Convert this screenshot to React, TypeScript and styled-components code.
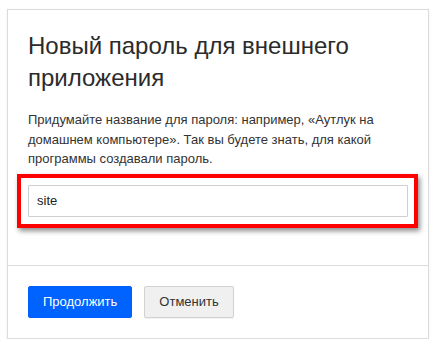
import React from "react";
import styled, { createGlobalStyle } from "styled-components";

const Global = createGlobalStyle`
  html, body { margin: 0; padding: 0; background: #fff; }
  body { font-family: "Liberation Sans", Arial, sans-serif; color: #333; }
  * { box-sizing: border-box; }
`;

const Page = styled.div`
  padding: 9px 10px 0 7px;
`;

const Card = styled.div`
  width: 422px;
  background: #fff;
  border: 1px solid #dcdcdc;
  box-shadow: 0 1px 2px rgba(0, 0, 0, 0.08);
`;

const Body = styled.div`
  padding: 20px 20px 48px 20px;
  display: flex;
  flex-direction: column;
`;

const Title = styled.h1`
  margin: 0;
  font-size: 24px;
  line-height: 32px;
  font-weight: 400;
  color: #2b2b2b;
`;

const Text = styled.p`
  margin: 16px 0 0 0;
  font-size: 13px;
  line-height: 19.5px;
  color: #333;
`;

const FieldWrap = styled.div`
  position: relative;
  margin-top: 16px;
`;

const Input = styled.input`
  display: block;
  width: 100%;
  height: 32px;
  padding: 0 8px;
  border: 1px solid #cfcfcf;
  border-radius: 1px;
  font-family: "Liberation Sans", Arial, sans-serif;
  font-size: 13px;
  color: #222;
  background: #fff;
  outline: none;
`;

const Highlight = styled.div`
  position: absolute;
  left: -11px;
  right: -10px;
  top: -11px;
  bottom: -11px;
  border: 4px solid #ff0000;
  box-shadow: 2px 3px 5px rgba(0, 0, 0, 0.45);
  pointer-events: none;
`;

const Footer = styled.div`
  border-top: 1px solid #dcdcdc;
  padding: 20px;
  display: flex;
  gap: 12px;
`;

const Button = styled.button<{ $primary?: boolean }>`
  height: 32px;
  padding: 0 14px;
  border-radius: 2px;
  font-family: "Liberation Sans", Arial, sans-serif;
  font-size: 13px;
  cursor: pointer;
  border: 1px solid ${(p) => (p.$primary ? "#0060fe" : "#d2d2d2")};
  background: ${(p) => (p.$primary ? "#0062ff" : "#f0f0f0")};
  color: ${(p) => (p.$primary ? "#fff" : "#333")};
  box-shadow: ${(p) => (p.$primary ? "none" : "0 1px 1px rgba(0,0,0,0.06)")};
`;

export default function App() {
  return (
    <>
      <Global />
      <Page>
        <Card>
          <Body>
            <Title>Новый пароль для внешнего приложения</Title>
            <Text>
              Придумайте название для пароля: например, «Аутлук на домашнем
              компьютере». Так вы будете знать, для какой программы создавали
              пароль.
            </Text>
            <FieldWrap>
              <Input defaultValue="site" />
              <Highlight />
            </FieldWrap>
          </Body>
          <Footer>
            <Button $primary>Продолжить</Button>
            <Button>Отменить</Button>
          </Footer>
        </Card>
      </Page>
    </>
  );
}
